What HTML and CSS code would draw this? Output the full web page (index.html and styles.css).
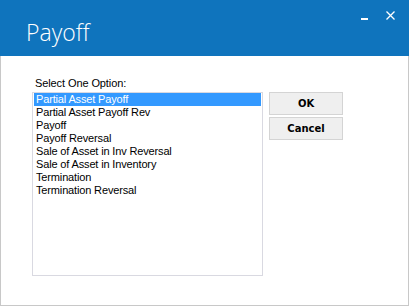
FILE: index.html
```html
<!DOCTYPE html>
<html lang="en">
<head>
  <meta charset="UTF-8" />
  <title>Payoff</title>
  <link rel="stylesheet" href="styles.css">
</head>
<body>

  <div class="window">
    <!-- Title bar -->
    <div class="titlebar">
      <h1>Payoff</h1>
      <div class="controls">
        <span class="ctl-min"></span>
        <svg class="ctl-close" width="9" height="9" viewBox="0 0 9 9">
          <path d="M0.5 0.5 L8.5 8.5 M8.5 0.5 L0.5 8.5" stroke="#fff" stroke-width="1.3" fill="none"/>
        </svg>
      </div>
    </div>

    <!-- Body -->
    <div class="content">
      <div class="picker">
        <label class="picker-label">Select One Option:</label>
        <ul class="listbox">
          <li class="selected">Partial Asset Payoff</li>
          <li>Partial Asset Payoff Rev</li>
          <li>Payoff</li>
          <li>Payoff Reversal</li>
          <li>Sale of Asset in Inv Reversal</li>
          <li>Sale of Asset in Inventory</li>
          <li>Termination</li>
          <li>Termination Reversal</li>
        </ul>
      </div>
      <div class="buttons">
        <button class="btn">OK</button>
        <button class="btn">Cancel</button>
      </div>
    </div>
  </div>

</body>
</html>
```

FILE: styles.css
```css
html, body {
  margin: 0;
  padding: 0;
  background: #ffffff;
}

.window {
  width: 409px;
  height: 306px;
  box-sizing: border-box;
  border: 1px solid #c8c8c8;
  border-top: none;
  background: #ffffff;
  font-family: 'Liberation Sans', Arial, sans-serif;
}

.titlebar {
  height: 56px;
  margin: 0 -1px;
  background: #0f74bd;
  color: #ffffff;
  display: flex;
  justify-content: space-between;
}

.titlebar h1 {
  margin: 0;
  padding: 17px 0 0 26px;
  font-family: 'Open Sans', sans-serif;
  font-weight: 300;
  font-size: 23px;
  line-height: 30px;
}

.controls {
  display: flex;
  align-items: flex-start;
  padding: 11px 14px 0 0;
  gap: 18px;
}

.ctl-min {
  display: block;
  width: 7px;
  height: 2px;
  margin-top: 7px;
  background: #ffffff;
}

.ctl-close {
  display: block;
}

.content {
  display: flex;
  padding: 21px 0 0 31px;
  gap: 6px;
}

.picker {
  display: flex;
  flex-direction: column;
}

.picker-label {
  font-size: 11px;
  line-height: 13px;
  color: #000;
  padding-left: 3px;
  margin-bottom: 2px;
  letter-spacing: -0.1px;
}

.listbox {
  list-style: none;
  margin: 0;
  padding: 0 0 0 1px;
  width: 231px;
  height: 184px;
  box-sizing: border-box;
  border: 1px solid #d9d9e1;
}

.listbox li {
  font-size: 11px;
  line-height: 13px;
  height: 13px;
  padding-left: 2px;
  margin-right: 1px;
  color: #000;
  white-space: nowrap;
  letter-spacing: -0.15px;
}

.listbox li.selected {
  background: #3399ff;
  color: #ffffff;
}

.buttons {
  display: flex;
  flex-direction: column;
  gap: 2px;
  padding-top: 15px;
}

.btn {
  width: 74px;
  height: 23px;
  margin: 0;
  padding: 0;
  box-sizing: border-box;
  border: 1px solid #d4d4d4;
  background: #efefef;
  font-family: 'DejaVu Sans', sans-serif;
  font-weight: bold;
  font-size: 10px;
  color: #000;
}
```
